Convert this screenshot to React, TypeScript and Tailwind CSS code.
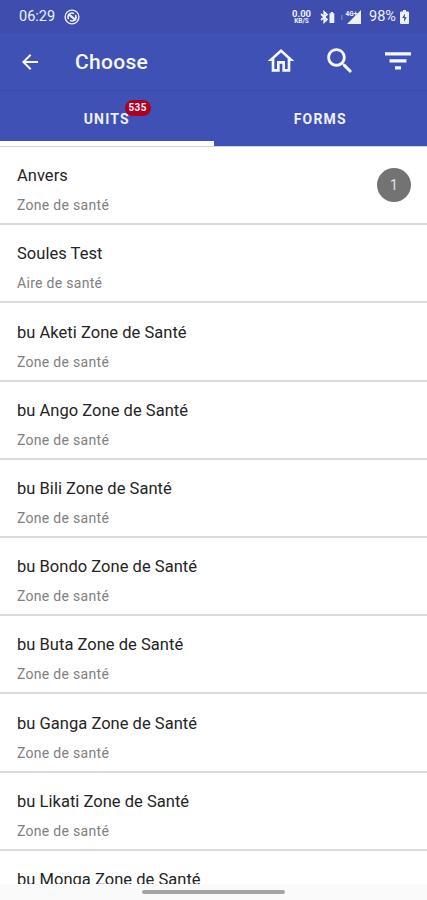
import type { ReactNode } from "react";

type Unit = {
  name: string;
  type?: string;
  count?: number;
};

const units: Unit[] = [
  { name: "Anvers", type: "Zone de santé", count: 1 },
  { name: "Soules Test", type: "Aire de santé" },
  { name: "bu Aketi Zone de Santé", type: "Zone de santé" },
  { name: "bu Ango Zone de Santé", type: "Zone de santé" },
  { name: "bu Bili Zone de Santé", type: "Zone de santé" },
  { name: "bu Bondo Zone de Santé", type: "Zone de santé" },
  { name: "bu Buta Zone de Santé", type: "Zone de santé" },
  { name: "bu Ganga Zone de Santé", type: "Zone de santé" },
  { name: "bu Likati Zone de Santé", type: "Zone de santé" },
  { name: "bu Monga Zone de Santé" },
];

function StatusBar() {
  return (
    <div className="flex h-[33px] shrink-0 items-center bg-[#3f4eae] pr-[18px] pl-[19px] text-[#eef0fd]">
      <span className="w-[37px] pt-[2px] text-[14.5px] leading-none">06:29</span>
      <svg className="ml-2" width="16" height="16" viewBox="0 0 16 16" fill="none" stroke="currentColor">
        <circle cx="8" cy="8" r="6.9" strokeWidth="1.4" />
        <path d="M4.6 10.2A4 4 0 0 1 10 4.6M11.4 5.8A4 4 0 0 1 6 11.4" strokeWidth="1.5" />
        <path d="m4.4 5.2 7.4 6" strokeWidth="2.2" />
      </svg>

      <div className="ml-auto flex items-center">
        {/* Network speed */}
        <div className="flex w-[21px] flex-col items-center font-bold">
          <span className="text-[9.5px] leading-[9px]">0.00</span>
          <span className="text-[6.5px] leading-[7px]">KB/S</span>
        </div>
        {/* Bluetooth with device battery */}
        <svg className="ml-[8px]" width="15" height="14" viewBox="0 0 15 14" fill="none" stroke="currentColor">
          <path d="m1 4 6 5.5L4.2 12V2L7 4.5 1 10" strokeWidth="1.7" />
          <path d="M9.5 3.2h4.8V13H9.5zM10.8 2h2.2v1.2h-2.2z" fill="currentColor" stroke="none" />
        </svg>
        <svg className="ml-[6px]" width="21" height="14" viewBox="0 0 21 14" fill="currentColor">
          <path d="M0 5h1.5v5H0z" opacity="0.3" />
          <path d="M20 0v14H6z" />
          <text x="4.5" y="5.5" fontSize="6.5" fontWeight="700">
            4G+
          </text>
        </svg>
        <span className="ml-[7px] w-[28px] pt-[2px] text-[14.5px] leading-none">98%</span>
        <svg className="ml-[3px]" width="9" height="14" viewBox="0 0 9 14">
          <path d="M3 0h3v1.5h2.2L9 2.3v11l-.7.7H.7L0 13.3v-11l.8-.8H3z" fill="currentColor" />
          <path d="M5 3.5 2.2 8h2L4 12l2.8-4.8h-2z" fill="#3f4eae" />
        </svg>
      </div>
    </div>
  );
}

function AppBar() {
  return (
    <header className="flex h-[57px] shrink-0 items-center bg-[#3f51b5] pr-[15px] pl-[18px] text-[#f6f7ff]">
      <svg width="24" height="24" viewBox="0 0 24 24" fill="currentColor">
        <path d="M20 11H7.83l5.59-5.59L12 4l-8 8 8 8 1.41-1.41L7.83 13H20z" />
      </svg>
      <h1 className="mt-[2px] ml-[33px] text-[21px] leading-none font-medium tracking-[0.3px]">Choose</h1>

      <div className="ml-auto flex items-center">
        <svg className="mt-[-2px]" width="32" height="32" viewBox="0 0 24 24" fill="currentColor">
          <path d="m12 5.69 5 4.5V18h-2v-6H9v6H7v-7.81l5-4.5M12 3 2 12h3v8h6v-6h2v6h6v-8h3L12 3z" />
        </svg>
        <svg className="mt-[-2px] ml-[26px]" width="34" height="34" viewBox="0 0 24 24" fill="currentColor">
          <path d="M15.5 14h-.79l-.28-.27C15.41 12.59 16 11.11 16 9.5 16 5.91 13.09 3 9.5 3S3 5.91 3 9.5 5.91 16 9.5 16c1.61 0 3.09-.59 4.23-1.57l.27.28v.79l5 4.99L20.49 19l-4.99-5zm-6 0C7.01 14 5 11.99 5 9.5S7.01 5 9.5 5 14 7.01 14 9.5 11.99 14 9.5 14z" />
        </svg>
        <svg className="mt-[-2px] ml-[27px]" width="28" height="18" viewBox="0 0 28 18" fill="currentColor">
          <path d="M1 0.3h26v3.2H1zM5.5 7.3h17v3.2h-17zM11 14.3h6v3.2h-6z" />
        </svg>
      </div>
    </header>
  );
}

function Tab({ active = false, children }: { active?: boolean; children: ReactNode }) {
  return (
    <div className="relative flex flex-1 items-center justify-center">
      <span className="relative text-[14px] leading-none font-bold tracking-[1.2px] text-[#edf0ff]">
        {children}
      </span>
      {active && <div className="absolute inset-x-0 bottom-0 h-[5px] bg-white" />}
    </div>
  );
}

function Tabs() {
  return (
    <nav className="flex h-[56px] shrink-0 border-t border-[#394aab] bg-[#3f51b5]">
      <Tab active>
        UNITS
        <span className="absolute -top-[12px] left-[41px] flex h-[16px] w-[26px] items-center justify-center rounded-full bg-[#b00020] text-[10px] font-bold tracking-[0.3px]">
          535
        </span>
      </Tab>
      <Tab>FORMS</Tab>
    </nav>
  );
}

function UnitRow({ unit }: { unit: Unit }) {
  return (
    <li className="flex h-[78.2px] shrink-0 items-start justify-between border-b-2 border-[#dadada] pr-[16px] pl-[17px]">
      <div className="flex flex-col pt-[17.3px]">
        <span className="text-[16.5px] leading-[24px] tracking-[0.03px] text-[#242424]">{unit.name}</span>
        {unit.type && (
          <span className="mt-[7px] text-[14px] leading-[20px] tracking-[0.3px] text-[#808080]">{unit.type}</span>
        )}
      </div>
      {unit.count !== undefined && (
        <span className="mt-[21px] flex size-[34px] items-center justify-center rounded-full bg-[#737373] text-[14px] text-[#e4e4e4]">
          {unit.count}
        </span>
      )}
    </li>
  );
}

export default function App() {
  return (
    <div className="flex h-[900px] w-[427px] flex-col overflow-hidden bg-white font-['Roboto',sans-serif]">
      <StatusBar />
      <AppBar />
      <Tabs />
      <ul className="flex min-h-0 flex-1 flex-col overflow-hidden border-t border-[#d2d2d6]">
        {units.map((unit) => (
          <UnitRow key={unit.name} unit={unit} />
        ))}
      </ul>
      {/* Gesture navigation bar */}
      <div className="flex h-[16px] shrink-0 justify-center bg-[#fafafa] pt-[6px]">
        <div className="h-[4px] w-[143px] rounded-full bg-[#a4a4a4]" />
      </div>
    </div>
  );
}
